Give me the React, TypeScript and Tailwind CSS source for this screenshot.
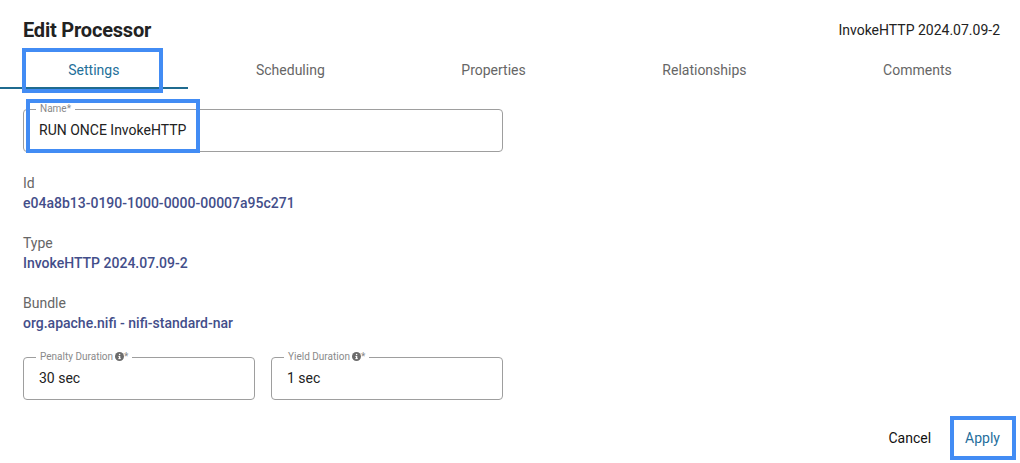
import React from 'react';

const tabs = ['Settings', 'Scheduling', 'Properties', 'Relationships', 'Comments'];

function InfoIcon() {
  return (
    <svg width="9" height="9" viewBox="0 0 16 16" className="inline-block ml-[2px] -mt-[2px]">
      <circle cx="8" cy="8" r="8" fill="#6b6b6b" />
      <rect x="7" y="7" width="2.4" height="5.5" fill="#fff" />
      <rect x="5.8" y="7" width="2.4" height="1.4" fill="#fff" />
      <rect x="5.8" y="11.2" width="4.6" height="1.4" fill="#fff" />
      <circle cx="8.2" cy="4.5" r="1.4" fill="#fff" />
    </svg>
  );
}

function OutlinedField({ label, value, info, className }: { label: string; value: string; info?: boolean; className?: string }) {
  return (
    <div className={`relative h-[43px] border border-[#9e9e9e] rounded-[4px] flex items-center pl-[15px] ${className ?? ''}`}>
      <span className="absolute -top-[7px] left-[12px] bg-white px-[4px] text-[10px] leading-[12px] text-[#8a8a8a]">
        {label}
        {info && <InfoIcon />}*
      </span>
      <span className="text-[14px] text-[#222]">{value}</span>
    </div>
  );
}

function Detail({ label, value }: { label: string; value: string }) {
  return (
    <div className="flex flex-col">
      <span className="text-[14px] leading-[20px] text-[#666]">{label}</span>
      <span className="text-[14px] leading-[20px] font-medium text-[#434e8a]">{value}</span>
    </div>
  );
}

export default function App() {
  return (
    <div className="relative w-[1020px] h-[463px] bg-white flex flex-col font-['Roboto',sans-serif] overflow-hidden">
      <div className="flex items-center justify-between pl-[23px] pr-[20px] h-[54px] pt-[6px]">
        <h1 className="text-[20px] font-bold text-[#222] tracking-[-0.2px]">Edit Processor</h1>
        <span className="text-[14px] text-[#222]">InvokeHTTP 2024.07.09-2</span>
      </div>

      <div className="flex h-[35px]">
        {tabs.map((t, i) => (
          <div
            key={t}
            className={`flex-auto flex items-center justify-center px-6 text-[14px] border-b-2 ${
              i === 0 ? 'text-[#236f99] border-[#1f6b8f]' : 'text-[#666] border-transparent'
            }`}
          >
            {t}
          </div>
        ))}
      </div>

      <div className="flex flex-col pl-[23px] pt-[20px]">
        <OutlinedField label="Name" value="RUN ONCE InvokeHTTP" className="w-[480px]" />

        <div className="flex flex-col gap-[20px] mt-[21px]">
          <Detail label="Id" value="e04a8b13-0190-1000-0000-00007a95c271" />
          <Detail label="Type" value="InvokeHTTP 2024.07.09-2" />
          <Detail label="Bundle" value="org.apache.nifi - nifi-standard-nar" />
        </div>

        <div className="flex gap-[16px] mt-[24px]">
          <OutlinedField label="Penalty Duration" value="30 sec" info className="w-[232px] h-[42px]" />
          <OutlinedField label="Yield Duration" value="1 sec" info className="w-[232px] h-[42px]" />
        </div>
      </div>

      <div className="flex-1" />

      <div className="flex items-center justify-end gap-[34px] pr-[20px] pb-[14px]">
        <span className="text-[14px] text-[#111]">Cancel</span>
        <span className="text-[14px] text-[#1f6e9c]">Apply</span>
      </div>

      {/* annotation highlights */}
      <div className="absolute left-[22px] top-[48px] w-[141px] h-[45px] border-4 border-[#428cf4]" />
      <div className="absolute left-[26px] top-[99px] w-[174px] h-[54px] border-4 border-[#428cf4]" />
      <div className="absolute left-[950px] top-[416px] w-[66px] h-[44px] border-4 border-[#428cf4]" />
    </div>
  );
}
